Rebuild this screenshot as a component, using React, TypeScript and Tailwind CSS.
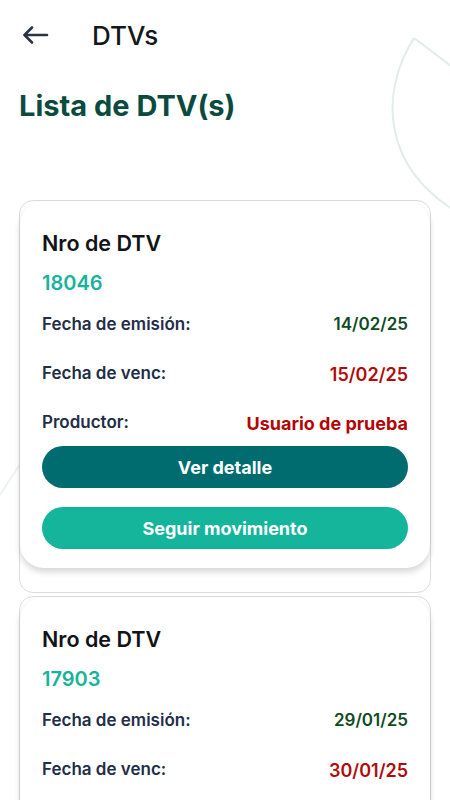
import React from 'react'

interface Dtv {
    nro: string
    emision: string
    venc: string
    productor: string
}

const dtvs: Dtv[] = [
    { nro: '18046', emision: '14/02/25', venc: '15/02/25', productor: 'Usuario de prueba' },
    { nro: '17903', emision: '29/01/25', venc: '30/01/25', productor: 'Usuario de prueba' },
]

function Row({ label, value, valueClass, className }: { label: string; value: string; valueClass: string; className: string }) {
    return (
        <div className={`flex items-center justify-between h-[24px] ${className}`}>
            <span className="text-[17px] font-semibold text-[#222d47]">{label}</span>
            <span className={valueClass}>{value}</span>
        </div>
    )
}

function DtvCard({ dtv }: { dtv: Dtv }) {
    return (
        <div className="rounded-[14px] border border-[#dcdcdc] pb-[24px]">
            <div className="rounded-[24px] bg-white shadow-[0_4px_6px_rgba(0,0,0,0.16)] px-[22px] pt-[28px] pb-[19px] flex flex-col">
                <div className="h-[28px] leading-[28px] text-[21.5px] font-semibold text-[#111318]">Nro de DTV</div>
                <div className="mt-[14px] h-[24px] leading-[24px] text-[20px] font-semibold text-[#17b39b]">{dtv.nro}</div>
                <Row label="Fecha de emisión:" value={dtv.emision} valueClass="text-[17px] font-semibold text-[#0e4a24]" className="mt-[18px]" />
                <Row label="Fecha de venc:" value={dtv.venc} valueClass="text-[18px] font-semibold text-[#b00c0c]" className="mt-[25px]" />
                <Row label="Productor:" value={dtv.productor} valueClass="text-[18px] font-bold text-[#b40404]" className="mt-[25px]" />
                <button className="mt-[11px] h-[42px] rounded-full bg-[#006c70] text-white text-[18px] font-bold">
                    Ver detalle
                </button>
                <button className="mt-[19px] h-[42px] rounded-full bg-[#15b59b] text-white text-[18px] font-bold">
                    Seguir movimiento
                </button>
            </div>
        </div>
    )
}

export default function App() {
    return (
        <div className="relative w-[450px] h-[800px] overflow-hidden bg-white font-['Inter',sans-serif]">
            {/* background leaf decoration */}
            <svg className="absolute inset-0 pointer-events-none" width="450" height="800" viewBox="0 0 450 800" fill="none">
                <path d="M414 38 L480 88" stroke="#e2ece9" strokeWidth="2" />
                <path d="M414 38 C378 95, 383 170, 462 215" stroke="#e2ece9" strokeWidth="2" />
                <path d="M-2 498 L24 458" stroke="#eef2f1" strokeWidth="2" />
            </svg>

            <div className="relative">
                <header className="flex items-center h-[70px] pl-[22px]">
                    <svg width="27" height="20" viewBox="0 0 27 20" fill="none" stroke="#2b3446" strokeWidth="2.6" strokeLinecap="round" strokeLinejoin="round">
                        <path d="M25 10 H3" />
                        <path d="M10 2.5 L2.5 10 L10 17.5" />
                    </svg>
                    <h1 className="ml-[43px] text-[26px] font-medium text-[#15171c]">DTVs</h1>
                </header>

                <h2 className="mt-[17px] pl-[19px] h-[38px] leading-[38px] text-[29px] font-bold text-[#0b4a3e]">Lista de DTV(s)</h2>

                <div className="mt-[75px] px-[19px] flex flex-col gap-[3px]">
                    {dtvs.map((d) => (
                        <DtvCard key={d.nro} dtv={d} />
                    ))}
                </div>
            </div>
        </div>
    )
}
